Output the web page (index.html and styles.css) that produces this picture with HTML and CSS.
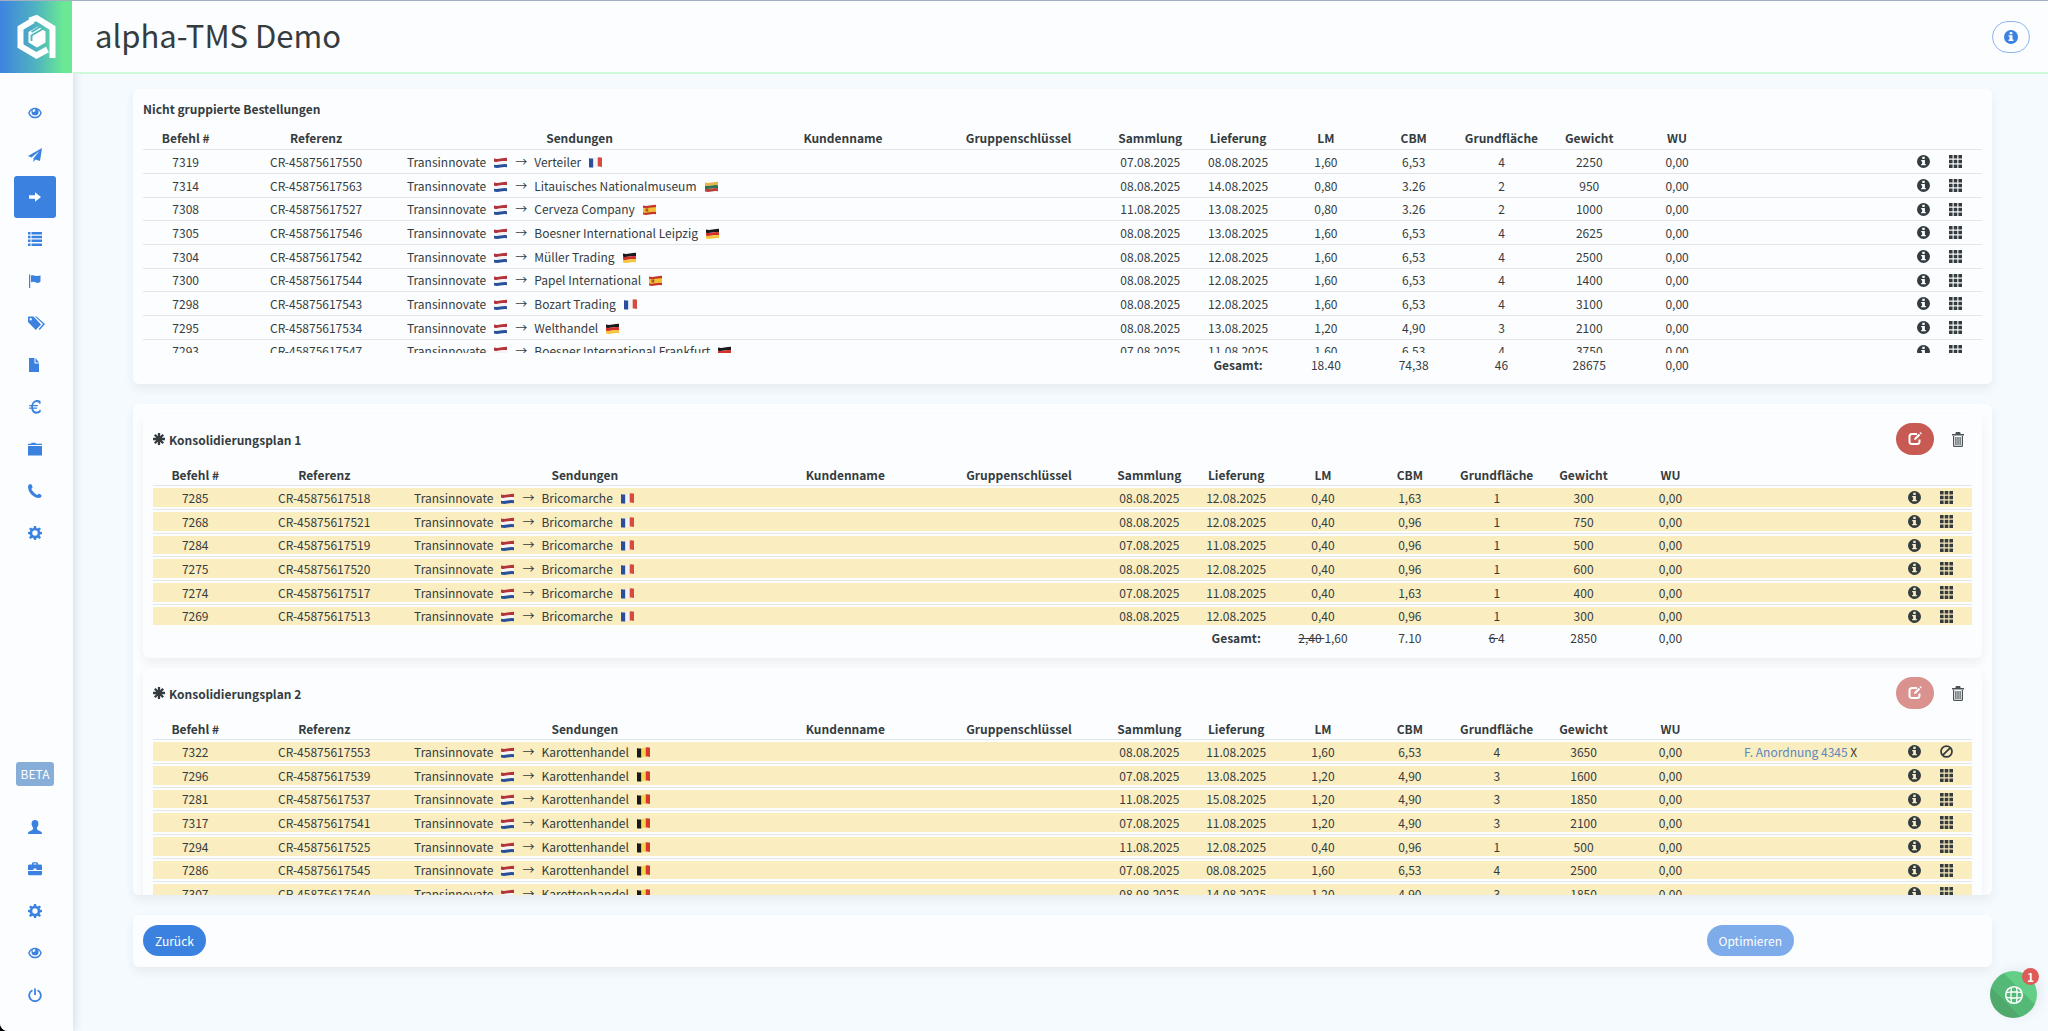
FILE: index.html
```
<!DOCTYPE html>
<html lang="de">
<head>
<meta charset="utf-8">
<title>alpha-TMS Demo</title>
<link rel="stylesheet" href="styles.css">
</head>
<body>
<svg class="sprite" aria-hidden="true">
  <symbol id="eye" viewBox="0 0 16 14"><path fill-rule="evenodd" d="M8 .8C4 .8 1.200 3.600 0 7c1.200 3.400 4 6.200 8 6.200s6.800-2.800 8-6.200C14.800 3.600 12 .8 8 .8zM8 11.500C5 11.500 2.800 9.800 1.800 7c.5-1.500 1.400-2.700 2.500-3.400A4.500 4.500 0 0 0 3.800 5.500a4.200 4.200 0 0 0 8.400 0c0-.7-.2-1.300-.5-1.900C12.800 4.300 13.700 5.500 14.200 7c-1 2.800-3.200 4.500-6.200 4.500zM6.200 3a1.300 1.300 0 1 1 1 2.200L6 6.200A2 2 0 0 1 6.200 3z"/></symbol>
  <symbol id="plane" viewBox="0 0 14 14"><path d="M14 0 0 8l3.500 1.500L11.500 3 5.500 10.300V14l2-2.500 4.500 1.500z"/></symbol>
  <symbol id="arrow" viewBox="0 0 14 14"><path d="M0 5h7V1.500L14 7l-7 5.500V9H0z"/></symbol>
  <symbol id="list" viewBox="0 0 14 14"><path d="M0 0h2.500v2.500H0zM3.500 0H14v2.500H3.500zM0 3.800h2.500v2.500H0zM3.500 3.800H14v2.500H3.500zM0 7.600h2.500v2.500H0zM3.500 7.600H14v2.500H3.500zM0 11.400h2.500v2.500H0zM3.500 11.400H14v2.500H3.500z"/></symbol>
  <symbol id="flag" viewBox="0 0 14 14"><path d="M1 .5h1.200V14H1zM3 1.500c2.500-1.200 4.500 1.500 9.500 0v6c-.8 1.500-3.500 1.800-5 .8-1.500-.8-3-.8-4.500 0z"/></symbol>
  <symbol id="tags" viewBox="0 0 17 14"><path fill-rule="evenodd" d="M0 1v5l7.800 8L13 8.500 5.500.5H1A1 1 0 0 0 0 1zM2.700 2a1.200 1.200 0 1 1 0 2.400 1.200 1.200 0 0 1 0-2.400z"/><path d="M7 .5h1.400L17 8l-5.300 6-1-1 4.300-5z"/></symbol>
  <symbol id="file" viewBox="0 0 14 14"><path d="M1 0h5.500v5.500H11V14H1z"/><path d="M7.500 0 11 4.500H7.500z"/></symbol>
  <symbol id="euro" viewBox="0 0 14 14"><path d="M12.500 1v3h-1C10.700 1.300 6 1.200 5.200 5H10l-.4 1.200H5v1.300h4.300L9 8.700H5.200c.8 3.600 5.500 3.500 6.500 1h1V12c-3.500 3-8.700 2-9.400-3.300H1l.4-1.200h1.800V6.200H1L1.500 5h2C4.400.2 9-1.200 12.500 1z"/></symbol>
  <symbol id="folder" viewBox="0 0 14 14"><path d="M0 4h14v9.500H0zM0 3V1.800h3L3.500.8h4l.5 1h6V3z"/></symbol>
  <symbol id="phone" viewBox="0 0 14 14"><path d="M2.500 0C1 .3 0 1.200 0 2.700.3 8.500 5 13.500 11 14c1.200 0 2.200-.8 2.600-2 .1-1.400-2.200-2.600-3-2.300L9.300 11C7 10 4.500 7.500 3.300 5l1.200-1.600C4.700 2.300 3.600 0 2.500 0z"/></symbol>
  <symbol id="cog" viewBox="0 0 14 14"><path fill-rule="evenodd" d="M6 0h2l.5 2 1.300.6L11.600 1.500 13 2.900 11.600 4.500l.6 1.300L14 6v2l-1.800.4-.6 1.300L13 11.400 11.500 13l-1.700-1.300-1.300.6L8 14H6l-.5-1.800-1.300-.5L2.500 13 1 11.400l1.300-1.700-.5-1.300L0 8V6l1.800-.3.6-1.300L1.100 2.900 2.500 1.400l1.700 1.200L5.500 2zM7 4.300a2.700 2.700 0 1 0 0 5.400 2.700 2.700 0 0 0 0-5.400z"/></symbol>
  <symbol id="user" viewBox="0 0 14 14"><path d="M7 0C4.700 0 3.500 1.600 3.600 3.800c0 1.600.6 3 1.600 3.900C5 9.800 4.600 10 2.300 10.900.7 11.600 0 12 0 14h14c0-2-.7-2.400-2.300-3.100-2.300-.9-2.700-1.100-2.900-3.200 1-.9 1.600-2.300 1.600-3.900C10.500 1.600 9.300 0 7 0z"/></symbol>
  <symbol id="case" viewBox="0 0 14 14"><path fill-rule="evenodd" d="M4 2.500V1l1-.8h4l1 .8v1.500h3l1 1V8H8.500V6.500h-3V8H0V3.500l1-1zM5.500 1.500v1h3v-1zM0 9h14v3.500l-1 .8H1l-1-.8z"/></symbol>
  <symbol id="power" viewBox="0 0 14 14"><path d="M4.500 2.200a5.800 5.800 0 1 0 5 0M7 .5V7" fill="none" stroke="currentColor" stroke-width="1.800"/></symbol>
  <symbol id="info" viewBox="0 0 14 14"><path fill-rule="evenodd" d="M7 0a7 7 0 1 1 0 14A7 7 0 0 1 7 0zM5.700 2v2.200h2.600V2zM4.500 5.300v1.300h1v3h-1V11h5V9.600h-1V5.300z"/></symbol>
  <symbol id="grid" viewBox="0 0 13 13"><path d="M0 0h3.600v3.600H0zM4.700 0h3.600v3.600H4.700zM9.400 0H13v3.600H9.400zM0 4.700h3.600v3.600H0zM4.700 4.700h3.600v3.600H4.700zM9.400 4.700H13v3.600H9.400zM0 9.400h3.600V13H0zM4.700 9.400h3.600V13H4.700zM9.400 9.400H13V13H9.400z"/></symbol>
  <symbol id="ban" viewBox="0 0 14 14"><path d="M7 1.100a5.900 5.900 0 1 1 0 11.800A5.900 5.900 0 0 1 7 1.100zM11 3 3 11" fill="none" stroke="currentColor" stroke-width="1.900"/></symbol>
  <symbol id="edit" viewBox="0 0 14 14"><path d="M9 2H4Q1.500 2 1.500 4.500v5Q1.500 12 4 12h5q2.500 0 2.500-2.500V7.500" fill="none" stroke="currentColor" stroke-width="2"/><path d="m6 8 .5-2L10.700 1.700l1.600 1.600L8 7.500zM11.500.9l.7-.9L14 1.800l-.9.7z"/></symbol>
  <symbol id="trash" viewBox="0 0 12 15"><path d="M0 2h3.500V1q0-1 1-1h3q1 0 1 1v1H12v1.500H0z"/><path d="M1.600 4v9.400q0 .9.900.9h7q.9 0 .9-.9V4M3.900 5v8M6 5v8M8.100 5v8" fill="none" stroke="currentColor" stroke-width="1.200"/></symbol>
  <symbol id="aster" viewBox="0 0 12 12"><path d="M6 0v12M0 6h12M1.800 1.800l8.400 8.400M10.200 1.800l-8.400 8.400" fill="none" stroke="currentColor" stroke-width="2.300"/></symbol>
  <symbol id="nl" viewBox="0 0 13 11"><path fill="#b3343a" d="M0 1.500q3 .8 6.500 0T13 .7v3.600q-3-.6-6.500.2T0 4.800z"/><path fill="#f4f4f6" d="M0 4.800q3 .5 6.500-.3T13 4.300v3q-3-.5-6.500.3T0 7.800z"/><path fill="#27509b" d="M0 7.800q3 .6 6.500-.2T13 7.300v3q-3-.5-6.500.3T0 10.600z"/></symbol>
  <symbol id="fr" viewBox="0 0 13 11"><path fill="#2b4f9e" d="M0 1q2 .8 4.400.4v9Q2 10.800 0 10.300z"/><path fill="#f3f3f6" d="M4.400 1.400Q6.500.7 8.700.6v9q-2.200 0-4.300.8z"/><path fill="#d8493e" d="M8.700.6Q11 0 13 .8V10q-2-.8-4.300-.4z"/></symbol>
  <symbol id="be" viewBox="0 0 13 11"><path fill="#17191a" d="M0 1q2 .8 4.400.4v9Q2 10.800 0 10.300z"/><path fill="#f6d850" d="M4.400 1.400Q6.500.7 8.700.6v9q-2.200 0-4.300.8z"/><path fill="#d8392e" d="M8.700.6Q11 0 13 .8V10q-2-.8-4.300-.4z"/></symbol>
  <symbol id="de" viewBox="0 0 13 11"><path fill="#1a1a1a" d="M0 1.500q3 .8 6.500 0T13 .7v3.600q-3-.6-6.500.2T0 4.800z"/><path fill="#d3312b" d="M0 4.800q3 .5 6.500-.3T13 4.300v3q-3-.5-6.500.3T0 7.800z"/><path fill="#f5c63c" d="M0 7.800q3 .6 6.500-.2T13 7.300v3q-3-.5-6.500.3T0 10.600z"/></symbol>
  <symbol id="lt" viewBox="0 0 13 11"><path fill="#e9b44a" d="M0 1.500q3 .8 6.500 0T13 .7v3.600q-3-.6-6.500.2T0 4.800z"/><path fill="#2f7350" d="M0 4.800q3 .5 6.500-.3T13 4.300v3q-3-.5-6.500.3T0 7.800z"/><path fill="#b9403c" d="M0 7.800q3 .6 6.500-.2T13 7.300v3q-3-.5-6.500.3T0 10.600z"/></symbol>
  <symbol id="es" viewBox="0 0 13 11"><path fill="#c5372d" d="M0 1.500q3 .8 6.500 0T13 .7v9.600q-3-.5-6.500.3T0 10.600z"/><path fill="#f2c032" d="M0 3.800q3 .8 6.500 0T13 3.200v4.900q-3-.6-6.500.2T0 8.400z"/><path fill="#a8572c" d="M2.500 4.500h2.800v3H2.500z"/></symbol>
</svg>
<div class="app">
  <aside class="side">
    <a class="logo" href="#" aria-label="alpha-TMS">
      <svg viewBox="0 0 72 72" width="72" height="72">
        <g fill="none" stroke="#fff" stroke-width="6">
          <path d="M33 19.500 20.500 27v18L36.500 54.500l11-6"/>
          <path d="m29.500 19.500 7-2.500L52.500 27v30"/>
        </g>
        <path fill="#fff" d="m38 25.500 7.500 5v11L37 46.500 28.500 41.500V31z"/>
        <path d="m43.500 27.500-12 7V40m0-9 9-5.500" fill="none" stroke="#52b8bd" stroke-width="2"/>
      </svg>
    </a>
    <nav class="menu">
      <a href="#" aria-label="Übersicht"><svg width="14" height="12"><use href="#eye"/></svg></a>
      <a href="#" aria-label="Senden"><svg width="14" height="14"><use href="#plane"/></svg></a>
      <a href="#" class="active" aria-label="Planung"><svg width="14" height="12"><use href="#arrow"/></svg></a>
      <a href="#" aria-label="Liste"><svg width="14" height="14"><use href="#list"/></svg></a>
      <a href="#" aria-label="Meldungen"><svg width="14" height="14"><use href="#flag"/></svg></a>
      <a href="#" aria-label="Tarife"><svg width="17" height="14"><use href="#tags"/></svg></a>
      <a href="#" aria-label="Dokumente"><svg width="14" height="14"><use href="#file"/></svg></a>
      <a href="#" aria-label="Rechnungen"><svg width="14" height="14"><use href="#euro"/></svg></a>
      <a href="#" aria-label="Ordner"><svg width="14" height="14"><use href="#folder"/></svg></a>
      <a href="#" aria-label="Kontakt"><svg width="14" height="14"><use href="#phone"/></svg></a>
      <a href="#" aria-label="Einstellungen"><svg width="14" height="14"><use href="#cog"/></svg></a>
    </nav>
    <span class="beta">BETA</span>
    <nav class="menu menu-bottom">
      <a href="#" aria-label="Profil"><svg width="14" height="14"><use href="#user"/></svg></a>
      <a href="#" aria-label="Firma"><svg width="14" height="14"><use href="#case"/></svg></a>
      <a href="#" aria-label="Verwaltung"><svg width="14" height="14"><use href="#cog"/></svg></a>
      <a href="#" aria-label="Ansicht"><svg width="14" height="12"><use href="#eye"/></svg></a>
      <a href="#" aria-label="Abmelden"><svg width="14" height="14"><use href="#power"/></svg></a>
    </nav>
  </aside>
  <div class="page">
    <header class="top">
      <h1>alpha-TMS Demo</h1>
      <button class="help" aria-label="Info"><svg width="14" height="14"><use href="#info"/></svg></button>
    </header>
    <main class="content">
      <section class="card ungrouped">
        <h2>Nicht gruppierte Bestellungen</h2>
        <div class="scroll"><table class="orders" id="ungrouped"></table></div>
      </section>
      <section class="card plans">
        <article class="card plan">
          <div class="plan-head">
            <h2><svg width="12" height="12"><use href="#aster"/></svg>Konsolidierungsplan 1</h2>
            <button class="edit" aria-label="Bearbeiten"><svg width="14" height="14"><use href="#edit"/></svg></button>
            <button class="trash" aria-label="Löschen"><svg width="12" height="15"><use href="#trash"/></svg></button>
          </div>
          <table class="orders marked" id="plan1"></table>
        </article>
        <article class="card plan">
          <div class="plan-head">
            <h2><svg width="12" height="12"><use href="#aster"/></svg>Konsolidierungsplan 2</h2>
            <button class="edit" aria-label="Bearbeiten" disabled><svg width="14" height="14"><use href="#edit"/></svg></button>
            <button class="trash" aria-label="Löschen"><svg width="12" height="15"><use href="#trash"/></svg></button>
          </div>
          <table class="orders marked" id="plan2"></table>
        </article>
      </section>
      <section class="card actions">
        <button class="btn">Zurück</button>
        <button class="btn" disabled>Optimieren</button>
      </section>
    </main>
  </div>
</div>
<button class="chat" aria-label="Chat">
  <svg viewBox="0 0 20 20" width="20" height="20"><g fill="none" stroke="#fff"><circle cx="10" cy="10" r="8.300" stroke-width="1.600"/><path d="M7.500 2.200 7 7l-4.700.7M12.500 2.200l.5 4.800 4.700.7M2.300 12.300 7 13l.5 4.800M17.700 12.300 13 13l-.5 4.800M7 7h6v6H7z" stroke-width="1.300"/></g></svg>
  <span class="count">1</span>
</button>
<script src="script.js"></script>
</body>
</html>
```
FILE: styles.css
```
* { box-sizing: border-box; }

html { background: #000; }

body {
  margin: 0;
  font-family: "Noto Sans CJK SC", "Noto Sans", sans-serif;
  font-size: 12px;
  line-height: 19px;
  color: #343c40;
}

svg { display: block; fill: currentColor; }
.sprite { display: none; }
h1, h2 { margin: 0; }
button { font: inherit; border: 0; padding: 0; cursor: pointer; }

.app {
  display: flex;
  min-height: 100vh;
  border-top: 1px solid #a3aec2;
  border-bottom-left-radius: 8px;
  overflow: hidden;
  background: #f5faff;
}

.side {
  display: flex;
  flex-direction: column;
  flex: none;
  width: 73px;
  padding-bottom: 15px;
  background: #fcfdff;
  box-shadow: 2px 0 8px rgba(40, 50, 60, .13);
}

.logo {
  width: 72px;
  height: 72px;
  background: linear-gradient(90deg, #3f83e0, #4fb3c0 50%, #6ae894 88%);
}

.menu {
  display: flex;
  flex-direction: column;
  margin: 19px 0 0 14px;
}

.menu a {
  display: flex;
  align-items: center;
  width: 42px;
  height: 42px;
  padding-left: 14px;
  border-radius: 3px;
  color: #3b82e0;
}

.menu a.active { background: #3b82e0; color: #fff; }

.beta {
  width: 38px;
  margin: auto 0 0 16px;
  border-radius: 3px;
  background: #86aed9;
  color: #fff;
  line-height: 24px;
  text-align: center;
}

.menu-bottom { margin-top: 20px; }

.page { flex: 1; min-width: 0; }

.top {
  display: flex;
  align-items: center;
  justify-content: space-between;
  height: 73px;
  padding: 0 18px 0 22px;
  border-bottom: 2px solid #cdf8dc;
  background: #fcfdff;
}

.top h1 { padding-bottom: 3px; font-size: 31px; font-weight: 400; line-height: 48px; }

.help {
  display: grid;
  place-items: center;
  width: 38px;
  height: 32px;
  border: 1px solid #8db6ef;
  border-radius: 16px;
  background: none;
  color: #3b82e0;
}

.content {
  display: flex;
  flex-direction: column;
  gap: 20px;
  padding: 15px 56px 20px 60px;
}

.card {
  border-radius: 6px;
  background: #fcfdff;
  box-shadow: 0 5px 10px rgba(40, 50, 70, .07);
}

.card h2 {
  display: flex;
  align-items: center;
  gap: 4px;
  font-size: 12px;
  font-weight: 700;
}

.ungrouped { padding: 10px 10px 9px; }

.scroll { max-height: 249px; margin-top: 8px; overflow: auto; scrollbar-width: none; }
.scroll thead th { position: sticky; top: 0; background: #fcfdff; }
.scroll tfoot td { position: sticky; bottom: 0; background: #fcfdff; }

.plans { max-height: 491px; padding: 10px; overflow: auto; scrollbar-width: none; }
.plan { padding: 9px 10px 10px; }
.plan + .plan { margin-top: 10px; }

.plan-head { display: flex; align-items: center; height: 32px; }
.plan-head h2 { flex: 1; }

.edit {
  display: grid;
  place-items: center;
  width: 38px;
  height: 32px;
  margin-right: 18px;
  border-radius: 16px;
  background: #c85a54;
  color: #fff;
}

.edit:disabled { opacity: .65; }
.trash { margin-right: 8px; background: none; color: #4b5357; }

.orders {
  width: 100%;
  table-layout: fixed;
  border-spacing: 0;
  text-align: center;
}

.orders th, .orders td { padding: 2px 0; }
.orders th { font-weight: 700; border-bottom: 1px solid #e4e7ea; }
.orders tbody td { border-bottom: 1px solid #e4e7ea; }
.orders tbody tr:nth-child(3n) td { line-height: 18px; }
.orders tfoot td { padding: 2px 0 1px; }
.orders tbody td.route { padding-left: 3px; text-align: left; }

.marked { margin-top: 9px; }
.marked tbody td { background: #faedbf content-box; }
.marked tbody td.route { padding-left: 0; text-indent: 3px; }
.marked tbody tr:last-child td { border-bottom: 0; }
.marked th { padding: 1px 0; }
.marked tfoot td { padding: 1px 0; }

.c1 { width: 4.64%; }
.c2 { width: 9.55%; }
.c3 { width: 19.1%; }
.c4 { width: 4.775%; }

.flag { display: inline-block; width: 13px; height: 11px; margin: 0 0 0 8px; vertical-align: -1px; }
.to { display: inline-block; width: 12px; margin: 0 7px 0 8px; text-indent: 0; }

.tools { display: flex; justify-content: center; align-items: center; gap: 19px; height: 18px; padding-left: 1px; }
.order-link { color: #5b87bd; text-decoration: none; }

.actions { display: flex; justify-content: space-between; padding: 10px 10px 11px; }

.btn {
  height: 31px;
  padding: 0 12px 1px;
  border-radius: 16px;
  background: #3b82e0;
  color: #fff;
}

.btn:disabled { margin-right: 188px; opacity: .65; }

.chat {
  position: fixed;
  right: 11px;
  bottom: 13px;
  display: grid;
  place-items: center;
  width: 47px;
  height: 47px;
  border-radius: 50%;
  background: linear-gradient(45deg, #4fa86c 34%, #54b877 34% 62%, #63ce85 62%);
  box-shadow: 4px -2px 12px rgba(40, 50, 60, .08);
}

.count {
  position: absolute;
  top: -3px;
  right: -2px;
  width: 17px;
  border-radius: 9px;
  background: #df5b57;
  color: #fff;
  font-weight: 700;
  line-height: 17px;
}
```
FILE: script.js
```
const HEAD = ["Befehl #", "Referenz", "Sendungen", "Kundenname", "Gruppenschlüssel", "Sammlung",
  "Lieferung", "LM", "CBM", "Grundfläche", "Gewicht", "WU", "", ""];
const WIDTHS = ["c1", "c2", "c3", "c2", "c2", "c4", "c4", "c4", "c4", "c4", "c4", "c4", "c2", ""];

const icon = (name, size) => `<svg width="${size}" height="${size}"><use href="#${name}"/></svg>`;
const flag = (code) => `<svg class="flag"><use href="#${code}"/></svg>`;

// number | reference | receiver | country | pickup | delivery | LM | CBM | floor | weight
function row(line) {
  const [no, ref, name, country, from, to, lm, cbm, floor, weight, link] = line.split("|");
  const cells = ["", "", from + ".08.2025", to + ".08.2025", lm, cbm, floor, weight, "0,00",
    link ? `<a class="order-link" href="#">${link}</a> X` : ""];
  return `<tr><td>${no}</td><td>CR-45875617${ref}</td>` +
    `<td class="route">Transinnovate${flag("nl")}<span class="to">→</span>${name}${flag(country)}</td>` +
    cells.map((c) => `<td>${c}</td>`).join("") +
    `<td><div class="tools">${icon("info", 13)}${icon(link ? "ban" : "grid", 13)}</div></td></tr>`;
}

function fill(id, lines, totals) {
  const foot = totals
    ? `<tfoot><tr><td colspan="6"></td><td><b>Gesamt:</b></td>${totals.map((t) => `<td>${t}</td>`).join("")}<td colspan="2"></td></tr></tfoot>`
    : "";
  document.getElementById(id).innerHTML =
    `<colgroup>${WIDTHS.map((w) => `<col class="${w}">`).join("")}</colgroup>` +
    `<thead><tr>${HEAD.map((h) => `<th>${h}</th>`).join("")}</tr></thead>` +
    `<tbody>${lines.map(row).join("")}</tbody>${foot}`;
}

fill("ungrouped", [
  "7319|550|Verteiler|fr|07|08|1,60|6,53|4|2250",
  "7314|563|Litauisches Nationalmuseum|lt|08|14|0,80|3.26|2|950",
  "7308|527|Cerveza Company|es|11|13|0,80|3.26|2|1000",
  "7305|546|Boesner International Leipzig|de|08|13|1,60|6,53|4|2625",
  "7304|542|Müller Trading|de|08|12|1,60|6,53|4|2500",
  "7300|544|Papel International|es|08|12|1,60|6,53|4|1400",
  "7298|543|Bozart Trading|fr|08|12|1,60|6,53|4|3100",
  "7295|534|Welthandel|de|08|13|1,20|4,90|3|2100",
  "7293|547|Boesner International Frankfurt|de|07|11|1,60|6,53|4|3750",
], ["18.40", "74,38", "46", "28675", "0,00"]);

fill("plan1", [
  "7285|518|Bricomarche|fr|08|12|0,40|1,63|1|300",
  "7268|521|Bricomarche|fr|08|12|0,40|0,96|1|750",
  "7284|519|Bricomarche|fr|07|11|0,40|0,96|1|500",
  "7275|520|Bricomarche|fr|08|12|0,40|0,96|1|600",
  "7274|517|Bricomarche|fr|07|11|0,40|1,63|1|400",
  "7269|513|Bricomarche|fr|08|12|0,40|0,96|1|300",
], ["<s>2,40 </s>1,60", "7.10", "<s>6 </s>4", "2850", "0,00"]);

fill("plan2", [
  "7322|553|Karottenhandel|be|08|11|1,60|6,53|4|3650|F. Anordnung 4345",
  "7296|539|Karottenhandel|be|07|13|1,20|4,90|3|1600",
  "7281|537|Karottenhandel|be|11|15|1,20|4,90|3|1850",
  "7317|541|Karottenhandel|be|07|11|1,20|4,90|3|2100",
  "7294|525|Karottenhandel|be|11|12|0,40|0,96|1|500",
  "7286|545|Karottenhandel|be|07|08|1,60|6,53|4|2500",
  "7307|540|Karottenhandel|be|08|14|1,20|4,90|3|1850",
]);
```
